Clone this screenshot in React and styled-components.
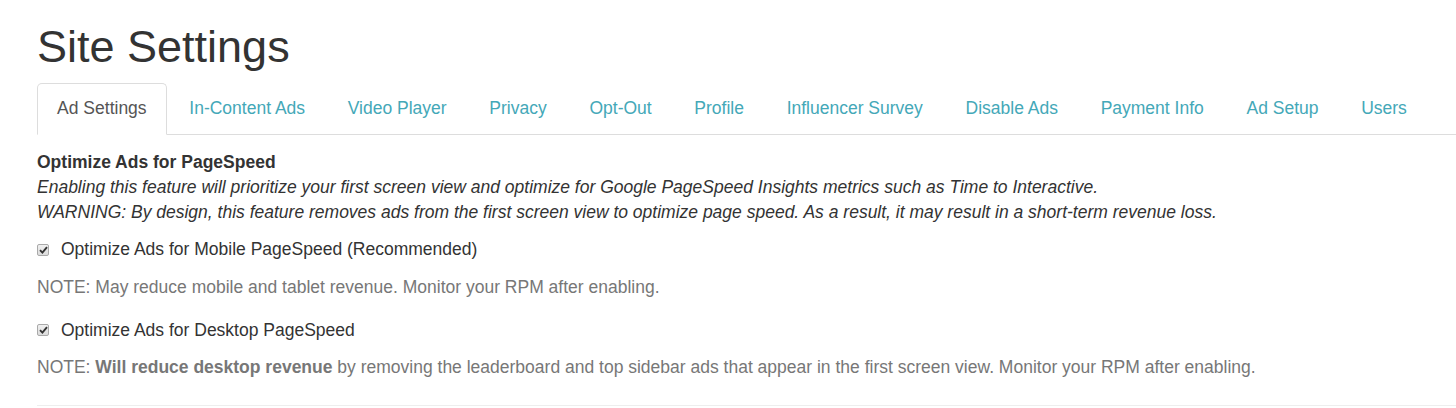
import React, { useState } from 'react'
import styled, { createGlobalStyle } from 'styled-components'

const GlobalStyle = createGlobalStyle`
    body {
        margin: 0;
        background: #fff;
        font-family: "Liberation Sans", Arial, Helvetica, sans-serif;
        font-size: 17.5px;
        line-height: 25px;
        color: #333;
    }
`

const Page = styled.div`
    padding: 22px 0 0 37px;
`

const Title = styled.h1`
    margin: 0;
    font-size: 45px;
    line-height: 1.1;
    font-weight: 400;
    color: #333;
`

const TabBar = styled.ul`
    display: flex;
    margin: 11px 0 0;
    padding: 0;
    list-style: none;
    border-bottom: 1px solid #ddd;
`

const Tab = styled.li`
    margin-right: 2.5px;
    margin-bottom: -1px;
    padding: 12.5px 19.1px;
    line-height: 25px;
    border: 1px solid ${p => (p.$active ? '#ddd' : 'transparent')};
    border-bottom-color: ${p => (p.$active ? '#fff' : 'transparent')};
    border-radius: 5px 5px 0 0;
    background: ${p => (p.$active ? '#fff' : 'transparent')};
    color: ${p => (p.$active ? '#555' : '#44a8b8')};
    cursor: pointer;
`

const Intro = styled.div`
    margin-top: 15px;
`

const Heading = styled.strong`
    display: block;
    font-weight: 700;
`

const Lead = styled.em`
    display: block;
`

const CheckRow = styled.label`
    display: flex;
    align-items: center;
    gap: 12px;
    margin-top: ${p => p.$gap}px;
    line-height: 25px;
    cursor: pointer;
`

const HiddenInput = styled.input`
    position: absolute;
    opacity: 0;
    width: 0;
    height: 0;
`

const Box = styled.span`
    display: inline-flex;
    align-items: center;
    justify-content: center;
    width: 10px;
    height: 10px;
    border: 1px solid #a9a9a9;
    border-radius: 2px;
    background: linear-gradient(#f0f0f0, #dcdcdc);
`

const Note = styled.p`
    margin: 12.5px 0 0;
    color: #777;

    b {
        font-weight: 700;
    }
`

const Rule = styled.hr`
    margin: 25px 0 0;
    border: 0;
    border-top: 1px solid #eee;
`

const tabs = [
    'Ad Settings',
    'In-Content Ads',
    'Video Player',
    'Privacy',
    'Opt-Out',
    'Profile',
    'Influencer Survey',
    'Disable Ads',
    'Payment Info',
    'Ad Setup',
    'Users',
]

function Check({ checked, onChange, children, gap }) {
    return (
        <CheckRow $gap={gap}>
            <HiddenInput type="checkbox" checked={checked} onChange={onChange} />
            <Box>
                {checked && (
                    <svg width="9" height="8" viewBox="0 0 9 8">
                        <path d="M1 4.2 L3.4 6.6 L8 1.2" fill="none" stroke="#333" strokeWidth="1.9" />
                    </svg>
                )}
            </Box>
            {children}
        </CheckRow>
    )
}

export default function App() {
    const [active, setActive] = useState('Ad Settings')
    const [mobile, setMobile] = useState(true)
    const [desktop, setDesktop] = useState(true)

    return (
        <Page>
            <GlobalStyle />
            <Title>Site Settings</Title>
            <TabBar>
                {tabs.map(t => (
                    <Tab key={t} $active={t === active} onClick={() => setActive(t)}>
                        {t}
                    </Tab>
                ))}
            </TabBar>

            <Intro>
                <Heading>Optimize Ads for PageSpeed</Heading>
                <Lead>
                    Enabling this feature will prioritize your first screen view and optimize for Google PageSpeed Insights metrics such as Time to Interactive.
                </Lead>
                <Lead>
                    WARNING: By design, this feature removes ads from the first screen view to optimize page speed. As a result, it may result in a short-term revenue loss.
                </Lead>
            </Intro>

            <Check gap={12.5} checked={mobile} onChange={() => setMobile(!mobile)}>
                Optimize Ads for Mobile PageSpeed (Recommended)
            </Check>
            <Note>NOTE: May reduce mobile and tablet revenue. Monitor your RPM after enabling.</Note>

            <Check gap={18} checked={desktop} onChange={() => setDesktop(!desktop)}>
                Optimize Ads for Desktop PageSpeed
            </Check>
            <Note>
                NOTE: <b>Will reduce desktop revenue</b> by removing the leaderboard and top sidebar ads that appear in the first screen view. Monitor your RPM after enabling.
            </Note>

            <Rule />
        </Page>
    )
}
